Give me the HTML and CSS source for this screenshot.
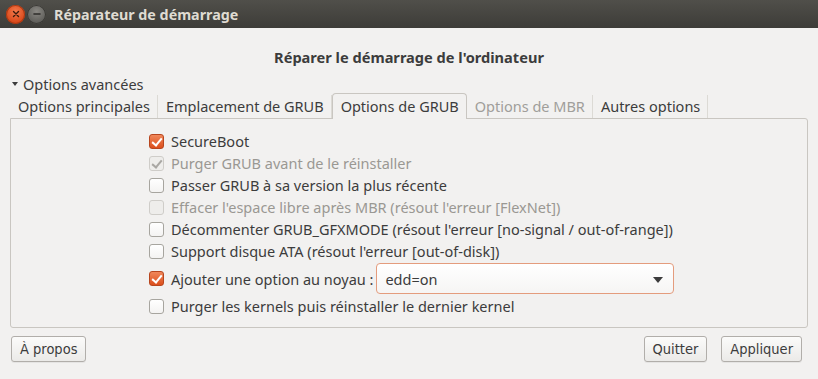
FILE: index.html
```html
<!DOCTYPE html>
<html lang="fr">
<head>
  <meta charset="UTF-8" />
  <title>Réparateur de démarrage</title>
  <link rel="stylesheet" href="styles.css">
</head>
<body>
  <header class="titlebar">
    <span class="wbtn wbtn-close">
      <svg width="10" height="10" viewBox="0 0 10 10"><path d="M2.5 2.5 L7.5 7.5 M7.5 2.5 L2.5 7.5" stroke="#3c1a0c" stroke-width="1.4" stroke-linecap="round"/></svg>
    </span>
    <span class="wbtn wbtn-min">
      <svg width="10" height="10" viewBox="0 0 10 10"><path d="M2 5 H8" stroke="#2e2d2a" stroke-width="1.6" stroke-linecap="round"/></svg>
    </span>
    <span class="title">Réparateur de démarrage</span>
  </header>

  <main class="content">
    <h1 class="heading">Réparer le démarrage de l'ordinateur</h1>
    <div class="expander"><span class="arrow"></span>Options avancées</div>

    <nav class="tabs">
      <span class="tab">Options principales</span>
      <span class="tab">Emplacement de GRUB</span>
      <span class="tab active">Options de GRUB</span>
      <span class="tab inactive">Options de MBR</span>
      <span class="tab">Autres options</span>
    </nav>

    <section class="panel">
      <label class="opt"><span class="box checked"></span>SecureBoot</label>
      <label class="opt disabled"><span class="box checked"></span>Purger GRUB avant de le réinstaller</label>
      <label class="opt"><span class="box"></span>Passer GRUB à sa version la plus récente</label>
      <label class="opt disabled"><span class="box"></span>Effacer l'espace libre après MBR (résout l'erreur [FlexNet])</label>
      <label class="opt"><span class="box"></span>Décommenter GRUB_GFXMODE (résout l'erreur [no-signal / out-of-range])</label>
      <label class="opt"><span class="box"></span>Support disque ATA (résout l'erreur [out-of-disk])</label>
      <div class="opt opt-combo">
        <span class="box checked"></span>Ajouter une option au noyau :
        <span class="combo">edd=on<span class="caret"></span></span>
      </div>
      <label class="opt"><span class="box"></span>Purger les kernels puis réinstaller le dernier kernel</label>
    </section>

    <footer class="actions">
      <button class="btn">À propos</button>
      <span class="spacer"></span>
      <button class="btn">Quitter</button>
      <button class="btn">Appliquer</button>
    </footer>
  </main>
</body>
</html>
```

FILE: styles.css
```css
* {
  margin: 0;
  padding: 0;
  box-sizing: border-box;
}

body {
  background: #f2f1f0;
  color: #3c3c3c;
  font-family: "Noto Sans", "Open Sans", sans-serif;
  font-size: 14.5px;
  width: 818px;
  height: 379px;
  overflow: hidden;
}

.titlebar {
  height: 28px;
  background: linear-gradient(#504f4a, #3d3c38);
  display: flex;
  align-items: center;
  padding-left: 6px;
  gap: 2px;
}

.wbtn {
  width: 19px;
  height: 19px;
  border-radius: 50%;
  display: flex;
  align-items: center;
  justify-content: center;
}

.wbtn-close {
  background: radial-gradient(circle at 50% 35%, #f47a4c, #d9481a 70%);
  box-shadow: inset 0 0 0 1px #a83812;
}

.wbtn-min {
  background: radial-gradient(circle at 50% 35%, #8a8883, #5f5e5a 70%);
  box-shadow: inset 0 0 0 1px #3a3935;
}

.title {
  margin-left: 6px;
  color: #dfdbd2;
  font-weight: bold;
  font-size: 14.3px;
}

.content {
  padding: 0 10px;
}

.heading {
  font-size: 14.6px;
  font-weight: bold;
  text-align: center;
  color: #3c3c3c;
  margin-top: 18px;
  height: 22px;
  line-height: 22px;
}

.expander {
  margin-top: 6px;
  padding-left: 2px;
  height: 20px;
  line-height: 20px;
  display: flex;
  align-items: center;
}

.arrow {
  width: 0;
  height: 0;
  border-left: 3px solid transparent;
  border-right: 3px solid transparent;
  border-top: 4px solid #3c3c3c;
  margin-right: 5px;
}

.tabs {
  display: flex;
  align-items: flex-end;
  height: 24px;
}

.tab {
  height: 23px;
  line-height: 22px;
  padding: 0 7px 0 8px;
  border-right: 1px solid #dcdad5;
  white-space: nowrap;
}

.tab.active {
  height: 26px;
  line-height: 25px;
  border: 1px solid #c9c6c1;
  border-bottom: none;
  border-radius: 4px 4px 0 0;
  background: #f2f1f0;
  margin-bottom: -1px;
  position: relative;
  z-index: 1;
}

.tab.inactive {
  color: #a09e9a;
}

.panel {
  border: 1px solid #c9c6c1;
  border-radius: 0 3px 3px 3px;
  height: 210px;
  padding: 11px 0 0 138px;
  display: flex;
  flex-direction: column;
}

.opt {
  display: flex;
  align-items: center;
  height: 22px;
  white-space: nowrap;
}

.opt.disabled {
  color: #9a9893;
}

.box {
  width: 15px;
  height: 15px;
  border: 1px solid #a7a59f;
  border-radius: 3px;
  background: linear-gradient(#ffffff, #f4f3f2);
  margin-right: 7px;
  flex: none;
  position: relative;
}

.box.checked {
  background: linear-gradient(#f0875a, #dc4f1c);
  border-color: #b8461e;
}

.box.checked::after {
  content: "";
  position: absolute;
  left: 4px;
  top: 1px;
  width: 4px;
  height: 8px;
  border-right: 2px solid #fff;
  border-bottom: 2px solid #fff;
  transform: rotate(40deg);
}

.opt.disabled .box {
  background: #eeedeb;
  border-color: #cfcdc9;
}

.opt.disabled .box.checked::after {
  border-color: #a9a7a3;
}

.opt-combo {
  height: 33px;
}

.combo {
  margin-left: 3px;
  width: 298px;
  height: 31px;
  border: 1px solid #e49c7d;
  border-radius: 4px;
  background: linear-gradient(#ffffff, #f6f5f4);
  padding-left: 8px;
  display: flex;
  align-items: center;
  position: relative;
  color: #3c3c3c;
}

.caret {
  position: absolute;
  right: 10px;
  top: 13px;
  border-left: 5px solid transparent;
  border-right: 5px solid transparent;
  border-top: 6px solid #3c3c3c;
}

.actions {
  display: flex;
  gap: 14px;
  margin-top: 8px;
  padding: 0 6px 0 1px;
}

.spacer {
  flex: 1;
}

.btn {
  height: 26px;
  padding: 0 8px;
  border: 1px solid #b1aeaa;
  border-radius: 3px;
  background: linear-gradient(#fbfbfa, #ebeae8);
  box-shadow: 0 1px 0 rgba(0, 0, 0, 0.05);
  color: #3c3c3c;
  font-family: "DejaVu Sans Condensed", "Liberation Sans Narrow", sans-serif;
  font-stretch: condensed;
  font-size: 14.5px;
}
```
